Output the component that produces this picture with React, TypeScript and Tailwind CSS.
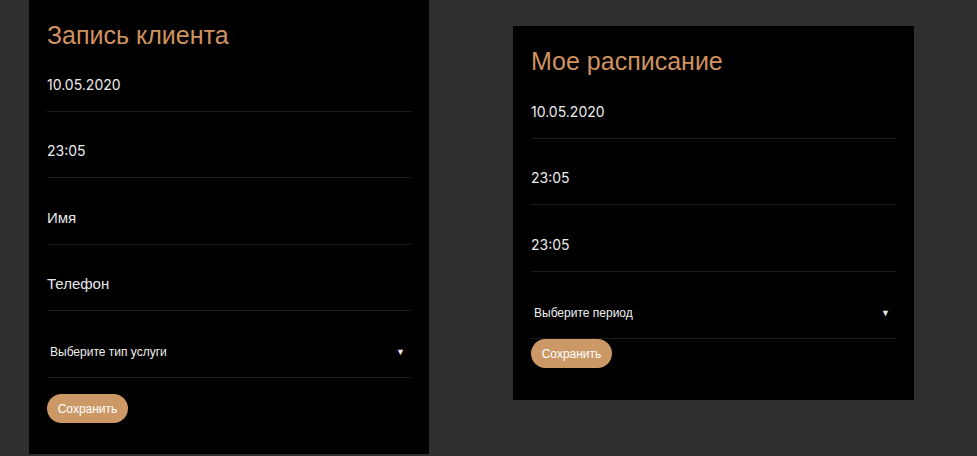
import React from "react";

const sans = { fontFamily: '"Liberation Sans", Arial, sans-serif' };

function Field({ text, h, mono }: { text: string; h: string; mono?: boolean }) {
    return (
        <div className={`${h} flex items-end pb-[16px] border-b border-[#1c1c1c]`}>
            <span
                className={mono ? "text-[14px] leading-[20px] text-[#ececec] font-['Inter',sans-serif]" : "text-[15px] leading-[20px] text-[#e6e6e6]"}
            >
                {text}
            </span>
        </div>
    );
}

function Select({ text, h }: { text: string; h: string }) {
    return (
        <div className={`${h} flex items-end pb-[18px] border-b border-[#1c1c1c]`}>
            <div className="flex w-full items-center justify-between pl-[3px] pr-[6px]">
                <span className="text-[12px] leading-[14px] text-[#f0f0f0]">{text}</span>
                <span className="text-[9px] leading-[14px] text-[#e8e8e8]">▼</span>
            </div>
        </div>
    );
}

function SaveButton() {
    return (
        <button className="h-[29px] w-[81px] rounded-full bg-[#cc9966] text-[12px] text-white">
            Сохранить
        </button>
    );
}

export default function App() {
    return (
        <div className="min-h-[456px] w-full bg-[#2f2f2f] flex items-start pl-[29px]" style={sans}>
            {/* запись клиента */}
            <div className="w-[400px] bg-black px-[18px] pt-[24px] pb-[31px] flex flex-col">
                <h2 className="text-[25px] leading-[22px] text-[#d0925f]">Запись клиента</h2>
                <Field text="10.05.2020" h="h-[66px]" mono />
                <Field text="23:05" h="h-[66px]" mono />
                <Field text="Имя" h="h-[67px]" />
                <Field text="Телефон" h="h-[66px]" />
                <Select text="Выберите тип услуги" h="h-[67px]" />
                <div className="mt-[16px]">
                    <SaveButton />
                </div>
            </div>

            {/* мое расписание */}
            <div className="ml-[84px] mt-[26px] w-[401px] bg-black px-[18px] pt-[24px] pb-[32px] flex flex-col">
                <h2 className="text-[25px] leading-[22px] text-[#d0925f]">Мое расписание</h2>
                <Field text="10.05.2020" h="h-[67px]" mono />
                <Field text="23:05" h="h-[66px]" mono />
                <Field text="23:05" h="h-[67px]" mono />
                <Select text="Выберите период" h="h-[67px]" />
                <div>
                    <SaveButton />
                </div>
            </div>
        </div>
    );
}
